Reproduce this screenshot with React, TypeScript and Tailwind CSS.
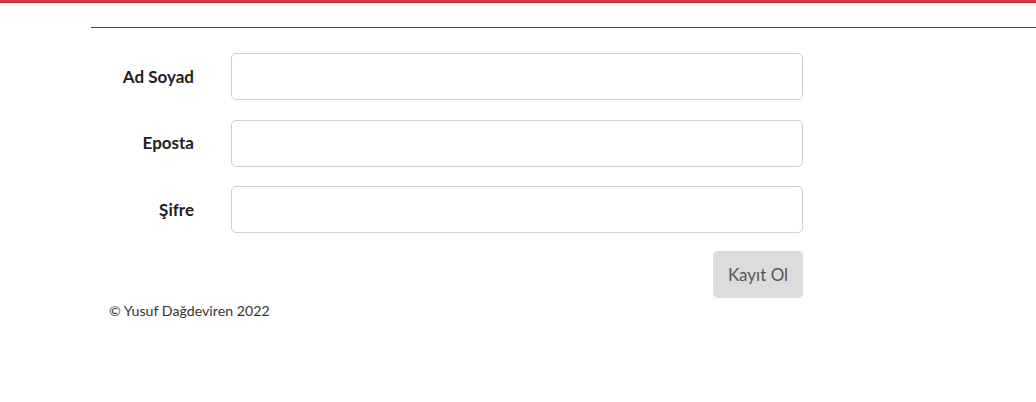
import { Component } from "react";

type FieldProps = { label: string; type?: string };

class Field extends Component<FieldProps> {
  render() {
    const { label, type = "text" } = this.props;
    return (
      <div className="flex items-center h-[47px]">
        <label className="w-[103px] text-right font-bold text-[17px] text-[#222]">{label}</label>
        <input
          type={type}
          className="ml-[37px] w-[572px] h-[47px] border border-[#cfcfcf] rounded-[5px] bg-white outline-none"
        />
      </div>
    );
  }
}

export default class App extends Component {
  render() {
    return (
      <div className="w-[1036px] h-[402px] bg-white" style={{ fontFamily: "Lato, 'Open Sans', sans-serif" }}>
        <div className="h-[3px] bg-[#e0343e] border-b border-[#b9262e]" />
        <div className="pl-[91px] pt-[24px]">
          <div className="h-px bg-[#8a2a2a]" />
          <form className="pt-[25px] flex flex-col gap-[19.5px]">
            <Field label="Ad Soyad" />
            <Field label="Eposta" type="email" />
            <Field label="Şifre" type="password" />
            <div className="w-[712px] flex justify-end -mt-[1.5px]">
              <button
                type="button"
                className="h-[47px] w-[90px] rounded-[5px] bg-[#dcdcdc] text-[#555] text-[17px]"
              >
                Kayıt Ol
              </button>
            </div>
          </form>
          <p className="pl-[18px] pt-[2px] text-[14.2px] text-[#333]">© Yusuf Dağdeviren 2022</p>
        </div>
      </div>
    );
  }
}
